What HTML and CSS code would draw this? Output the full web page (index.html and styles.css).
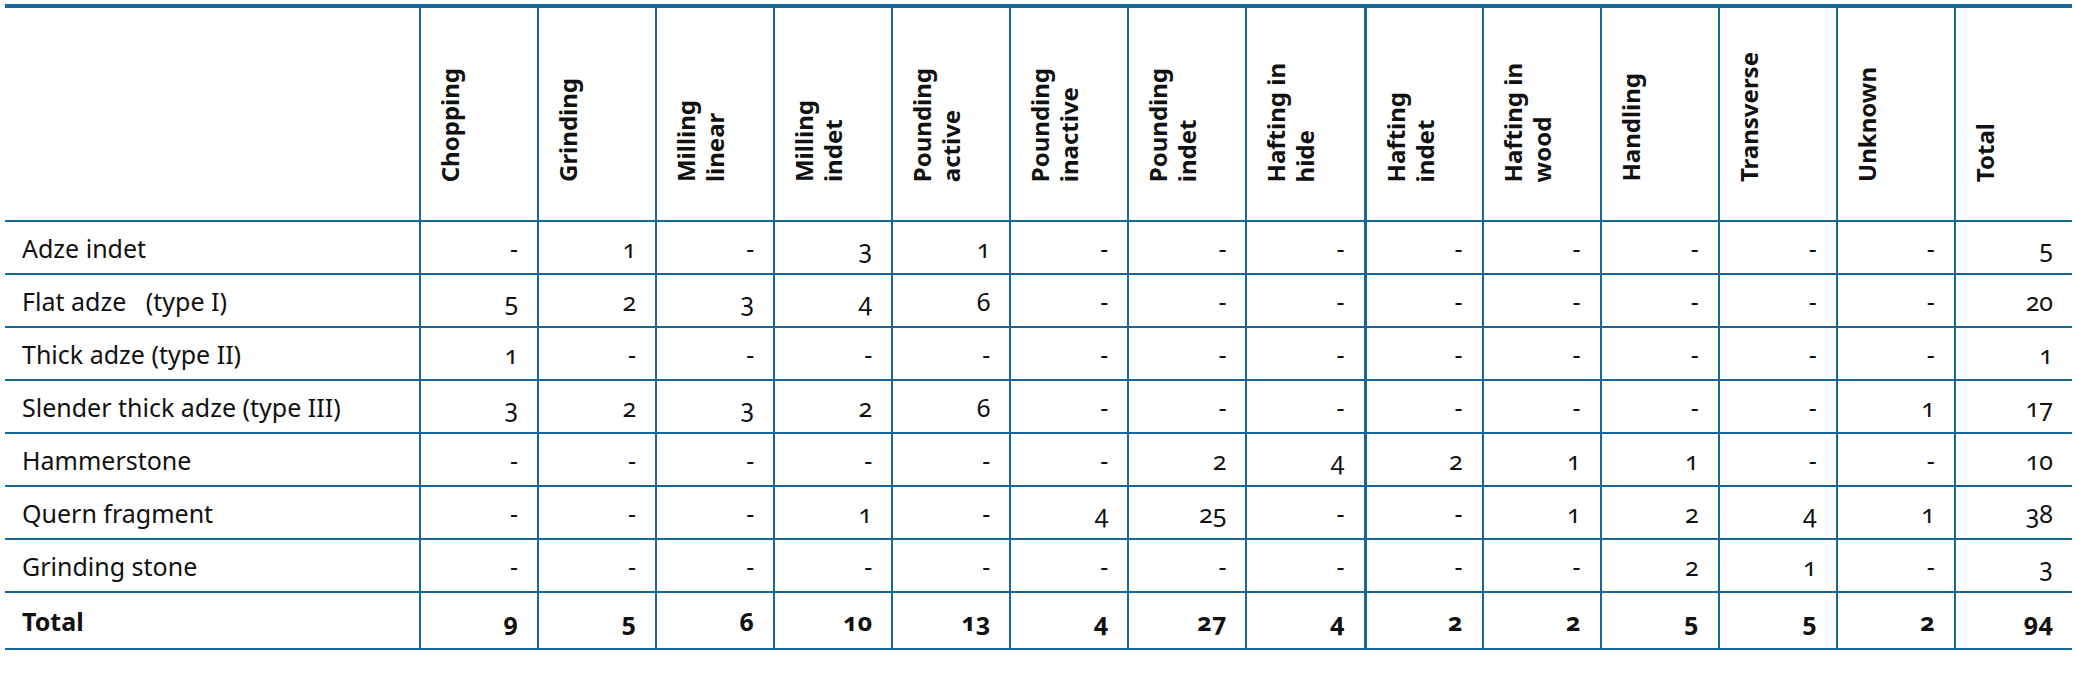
FILE: index.html
```html
<!DOCTYPE html>
<html lang="en">
<head>
<meta charset="utf-8">
<title>Use-wear table</title>
<link rel="stylesheet" href="styles.css">
</head>
<body>
<div class="page">
<table class="grid">
<colgroup>
<col class="label-col">
<col><col><col><col><col><col><col><col><col><col><col><col><col><col>
</colgroup>
<thead>
<tr class="head">
<th class="corner"></th>
<th class="h"><div class="rot">Chopping</div></th>
<th class="h"><div class="rot">Grinding</div></th>
<th class="h"><div class="rot">Milling<br>linear</div></th>
<th class="h"><div class="rot">Milling<br>indet</div></th>
<th class="h"><div class="rot">Pounding<br>active</div></th>
<th class="h"><div class="rot">Pounding<br>inactive</div></th>
<th class="h"><div class="rot">Pounding<br>indet</div></th>
<th class="h"><div class="rot">Hafting in<br>hide</div></th>
<th class="h split"><div class="rot">Hafting<br>indet</div></th>
<th class="h"><div class="rot">Hafting in<br>wood</div></th>
<th class="h"><div class="rot">Handling</div></th>
<th class="h"><div class="rot">Transverse</div></th>
<th class="h"><div class="rot">Unknown</div></th>
<th class="h"><div class="rot">Total</div></th>
</tr>
</thead>
<tbody>
<tr><td class="label">Adze indet</td><td>-</td><td>1</td><td>-</td><td>3</td><td>1</td><td>-</td><td>-</td><td>-</td><td class="split">-</td><td>-</td><td>-</td><td>-</td><td>-</td><td>5</td></tr>
<tr><td class="label">Flat adze&nbsp;&nbsp; (type I)</td><td>5</td><td>2</td><td>3</td><td>4</td><td>6</td><td>-</td><td>-</td><td>-</td><td class="split">-</td><td>-</td><td>-</td><td>-</td><td>-</td><td>20</td></tr>
<tr><td class="label">Thick adze (type II)</td><td>1</td><td>-</td><td>-</td><td>-</td><td>-</td><td>-</td><td>-</td><td>-</td><td class="split">-</td><td>-</td><td>-</td><td>-</td><td>-</td><td>1</td></tr>
<tr><td class="label">Slender thick adze (type III)</td><td>3</td><td>2</td><td>3</td><td>2</td><td>6</td><td>-</td><td>-</td><td>-</td><td class="split">-</td><td>-</td><td>-</td><td>-</td><td>1</td><td>17</td></tr>
<tr><td class="label">Hammerstone</td><td>-</td><td>-</td><td>-</td><td>-</td><td>-</td><td>-</td><td>2</td><td>4</td><td class="split">2</td><td>1</td><td>1</td><td>-</td><td>-</td><td>10</td></tr>
<tr><td class="label">Quern fragment</td><td>-</td><td>-</td><td>-</td><td>1</td><td>-</td><td>4</td><td>25</td><td>-</td><td class="split">-</td><td>1</td><td>2</td><td>4</td><td>1</td><td>38</td></tr>
<tr><td class="label">Grinding stone</td><td>-</td><td>-</td><td>-</td><td>-</td><td>-</td><td>-</td><td>-</td><td>-</td><td class="split">-</td><td>-</td><td>2</td><td>1</td><td>-</td><td>3</td></tr>
<tr class="total"><td class="label">Total</td><td>9</td><td>5</td><td>6</td><td>10</td><td>13</td><td>4</td><td>27</td><td>4</td><td class="split">2</td><td>2</td><td>5</td><td>5</td><td>2</td><td>94</td></tr>
</tbody>
</table>
</div>
</body>
</html>
```
FILE: styles.css
```css
html, body {
  margin: 0;
  padding: 0;
  background: #ffffff;
}

.page {
  padding: 4px 3px 0 5px;
}

.grid {
  width: 2067px;
  table-layout: fixed;
  border-collapse: separate;
  border-spacing: 0;
  border-top: 4px solid #166698;
  font-family: "Noto Sans", "Open Sans", sans-serif;
  color: #111111;
}

.label-col {
  width: 414px;
}

.head {
  height: 214px;
}

.grid tbody tr {
  height: 53px;
}

.grid tbody tr.total {
  height: 57px;
}

.grid th,
.grid td {
  border-bottom: 2px solid #166698;
  padding: 0;
}

.grid th + th,
.grid td + td {
  border-left: 2px solid #166698;
}

.grid th.split,
.grid td.split {
  border-left-width: 3px;
}

.grid th.h {
  vertical-align: bottom;
  text-align: left;
  padding: 0 0 38px 14px;
}

.rot {
  display: inline-block;
  vertical-align: bottom;
  writing-mode: vertical-rl;
  transform: rotate(180deg);
  font-weight: 700;
  font-size: 24px;
  line-height: 29px;
  white-space: nowrap;
  color: #111111;
}

.grid td {
  text-align: right;
  vertical-align: middle;
  padding-right: 19px;
  font-size: 25px;
  font-variant-numeric: oldstyle-nums;
  font-feature-settings: "onum" 1;
}

.grid td.label {
  text-align: left;
  padding: 0 0 0 17px;
}

.total td {
  font-weight: 700;
}
```
